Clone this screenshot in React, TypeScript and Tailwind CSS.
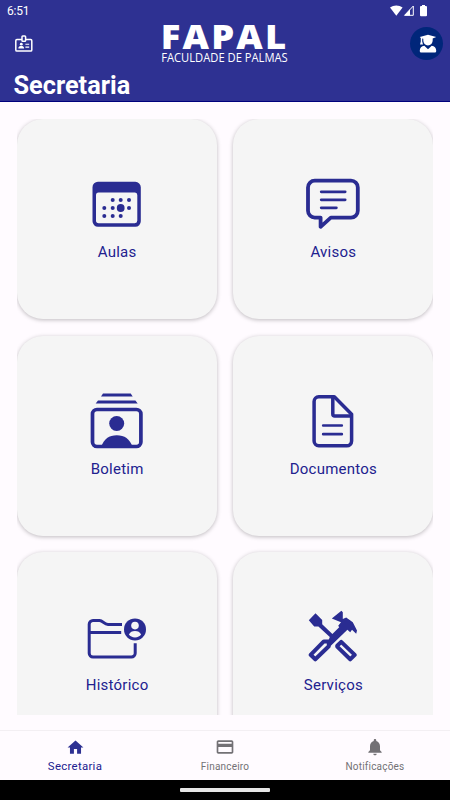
import type { ReactNode } from 'react';

function CalendarIcon() {
  return (
    <svg viewBox="0 0 60 60" className="size-[60px]" fill="currentColor">
      <path fillRule="evenodd" d="M11.2 7.8H48.3A5.5 5.5 0 0 1 53.8 13.3V47.3A5.5 5.5 0 0 1 48.3 52.8H11.2A5.5 5.5 0 0 1 5.5 47.3V13.3A5.5 5.5 0 0 1 11.2 7.8ZM11.5 18.5A2.5 2.5 0 0 0 9 21V46.5A2.7 2.7 0 0 0 11.7 49.2H47.8A2.7 2.7 0 0 0 50.3 46.5V21A2.5 2.5 0 0 0 48 18.5Z" />
      <circle cx="25.7" cy="26" r="2" />
      <circle cx="33.7" cy="26" r="2" />
      <circle cx="42" cy="26" r="2" />
      <circle cx="17.3" cy="34" r="2" />
      <circle cx="25.7" cy="34" r="2" />
      <circle cx="33.7" cy="34" r="3.9" />
      <circle cx="42" cy="34" r="2" />
      <circle cx="17.3" cy="42" r="2" />
      <circle cx="25.7" cy="42" r="2" />
      <circle cx="33.7" cy="42" r="2" />
    </svg>
  );
}

function MessageIcon() {
  return (
    <svg viewBox="0 0 60 60" className="size-[60px]" fill="none" stroke="currentColor" strokeWidth="3.8" strokeLinecap="round" strokeLinejoin="round">
      <path d="M12 6.7H48A6.8 6.8 0 0 1 54.8 13.5V36.8A6.8 6.8 0 0 1 48 43.6H27.8L17.6 52.8V43.6H12A6.8 6.8 0 0 1 5 36.8V13.5A6.8 6.8 0 0 1 12 6.7Z" />
      <path d="M18.2 17.8H42.2M18.2 25.8H42.2M18.2 33.8H33.4" strokeWidth="2.7" />
    </svg>
  );
}

function ReportIcon() {
  return (
    <svg viewBox="0 0 60 60" className="size-[60px]" fill="currentColor">
      <path d="M16 2.5H43.7L45.7 5.6H14ZM11 9.5H48.4L50.7 12.6H8.7Z" />
      <rect x="5.5" y="18.5" width="48.4" height="37" rx="4.5" fill="none" stroke="currentColor" strokeWidth="3.7" />
      <circle cx="29.7" cy="32.5" r="7.5" />
      <path d="M14 56C17 48 22 44.3 29.8 44.3S42.6 48 45.7 56Z" />
    </svg>
  );
}

function DocumentIcon() {
  return (
    <svg viewBox="0 0 60 60" className="size-[60px]" fill="none" stroke="currentColor" strokeWidth="3.5" strokeLinecap="round" strokeLinejoin="round">
      <path d="M15.8 5.7H31.3L48.6 23.3V50A4.8 4.8 0 0 1 43.8 54.8H15.8A4.8 4.8 0 0 1 11.1 50V10.5A4.8 4.8 0 0 1 15.8 5.7Z" />
      <path d="M29.8 6.5V23A2 2 0 0 0 31.8 25H48" />
      <path d="M20.2 34.5H38.8M20.2 43.2H38.8" strokeWidth="2.7" />
    </svg>
  );
}

function FolderUserIcon() {
  return (
    <svg viewBox="0 0 60 60" className="size-[60px]" fill="none" stroke="currentColor" strokeWidth="3">
      <path d="M48.2 36.3V46.2A3.8 3.8 0 0 1 44.4 50H6A3.8 3.8 0 0 1 2.2 46.2V17.3A3.8 3.8 0 0 1 6 13.5H12.5C16 13.5 17 17.4 21 17.4H35M2.2 25.4H34.2" />
      <circle cx="48" cy="22.4" r="11" fill="currentColor" stroke="none" />
      <circle cx="48" cy="18.6" r="3.8" fill="#f5f5f5" stroke="none" />
      <path d="M41.9 27.5C43 25.2 45.2 24.1 48 24.1S53 25.2 54.1 27.5C52.8 29.3 50.8 30.4 48 30.4S43.2 29.3 41.9 27.5Z" fill="#f5f5f5" stroke="none" />
    </svg>
  );
}

function ToolsIcon() {
  return (
    <svg viewBox="0 0 60 60" className="size-[60px]" fill="currentColor">
      <path d="M5.8 13.2L12.5 6.3L19.2 12.9V17.2L29.4 27L36.2 20.3L35.2 18.8L38 15.2L28.8 11.4L38.4 3.8L39.8 5.2V12L43.2 10.6L49.8 15.2L54 23.4L53.2 26.8L49 22.8L47.2 25.2L44.4 22.8L27.6 39L24.3 36.5L26.8 30L15.4 19.6H11.2Z" />
      <g fill="none" stroke="currentColor" strokeWidth="4" strokeLinejoin="round">
        <path d="M20.8 34.4H25.8V39.2L12.3 52.3L7.6 47.8Z" />
        <path d="M38.2 34.9L51.8 47.9L47.2 52.3L34.2 39.6V38.7Z" />
      </g>
    </svg>
  );
}

function BadgeIcon() {
  return (
    <svg viewBox="0 0 18 18" className="size-[18px]" fill="none" stroke="white" strokeWidth="1.5">
      <path d="M7 4.6H1.9A1.1 1.1 0 0 0 .8 5.7V15A1.1 1.1 0 0 0 1.9 16.1H15.7A1.1 1.1 0 0 0 16.8 15V5.7A1.1 1.1 0 0 0 15.7 4.6H10.8" />
      <rect x="7" y=".9" width="3.6" height="5.4" rx="0.8" />
      <path d="M10.4 9.2H14.2M10.4 12.1H14.2" strokeWidth="1.1" />
      <circle cx="6.3" cy="9.2" r="1.4" fill="white" stroke="none" />
      <path d="M3.3 13.4C3.3 11.6 4.9 11.1 6.3 11.1S9.1 11.6 9.1 13.4Z" fill="white" stroke="none" />
    </svg>
  );
}

function StudentIcon() {
  return (
    <svg viewBox="0 0 18 20" className="h-5 w-[18px] translate-x-px" fill="white">
      <path d="M.8 3L9 .8L17.2 3L13.7 4.4V6.3C13.7 9.2 11.6 11.5 9 11.5S4.3 9.2 4.3 6.3V4.8L3.2 4.4V7.4L4 10.4H1L1.8 7.4V3.9Z" />
      <path d="M5.3 11.8L9 15.3L12.7 11.8C15.5 12.3 17.2 14 17.2 16.5V17.3Q17.2 18.6 15.9 18.6H2.1Q.8 18.6 .8 17.3V16.5C.8 14 2.5 12.3 5.3 11.8Z" />
    </svg>
  );
}

function StatusIcons() {
  return (
    <svg viewBox="0 0 38 12" className="h-3 w-[38px]" fill="white">
      <path d="M0 2.4C3.6-.3 9-.3 12.6 2.4L6.3 10.8Z" />
      <path d="M23.3 1V10.3H14.6Z" fill="none" stroke="white" />
      <path d="M20 4.2V10.5H14.4Z" />
      <path d="M32 0H35V1H36Q37 1 37 2V10.3Q37 11.3 36 11.3H31Q30 11.3 30 10.3V2Q30 1 31 1H32Z" />
    </svg>
  );
}

function Card({ label, children }: { label: string; children: ReactNode }) {
  return (
    <button type="button" className="flex h-[200px] flex-col items-center rounded-[26px] bg-[#f5f5f5] pt-[55px] text-[#2a2c92] shadow-[0_1px_4px_rgba(0,0,0,0.26)]">
      {children}
      <span className="mt-[8px] pl-[0.5px] text-[15px] leading-5 tracking-[0.25px] text-[#21218f]">{label}</span>
    </button>
  );
}

export default function App() {
  return (
    <div className="flex h-[800px] w-[450px] flex-col overflow-hidden bg-[#fffbff] font-[Roboto,sans-serif]">
      <header className="h-[102px] shrink-0 border-b border-[#00007c] bg-[#2e3192] text-white">
        <div className="flex h-[22px] items-center justify-between pr-[22px] pl-[7px]">
          <span className="text-[12px] leading-none tracking-[-0.2px]">6:51</span>
          <StatusIcons />
        </div>
        <div className="flex h-[46px] justify-between pr-[7px] pl-[15px]">
          <div className="w-[33px] pt-[13px]">
            <BadgeIcon />
          </div>
          <svg viewBox="0 0 130 46" className="h-[46px] w-[130px] overflow-visible" fill="white">
            <text x="-3.2" y="27.2" textLength="127.5" lengthAdjust="spacingAndGlyphs" className="font-['Open_Sans',sans-serif] text-[34px] font-extrabold tracking-[2px]">FAPAL</text>
            <text x="-2.8" y="40.2" textLength="126.5" lengthAdjust="spacingAndGlyphs" className="font-['Open_Sans',sans-serif] text-[12px] font-normal">FACULDADE DE PALMAS</text>
          </svg>
          <div className="mt-[5px] flex size-[33px] items-center justify-center rounded-full bg-[#00267a]">
            <StudentIcon />
          </div>
        </div>
        <h1 className="pl-[13.5px] text-[25.3px] leading-[35px] font-bold">Secretaria</h1>
      </header>

      <main className="mx-[17px] mt-[17px] grid h-[596px] shrink-0 grid-cols-2 content-start gap-[16.5px] overflow-hidden">
        <Card label="Aulas"><CalendarIcon /></Card>
        <Card label="Avisos"><MessageIcon /></Card>
        <Card label="Boletim"><ReportIcon /></Card>
        <Card label="Documentos"><DocumentIcon /></Card>
        <Card label="Histórico"><FolderUserIcon /></Card>
        <Card label="Serviços"><ToolsIcon /></Card>
      </main>

      <nav className="mt-[15px] grid h-[50px] shrink-0 grid-cols-3 border-t border-[#f3eff3] text-[#737175]">
        <a href="#secretaria" className="flex flex-col items-center pt-[7px] text-[#2e3192]">
          <svg viewBox="0 0 24 24" className="size-[19px]" fill="currentColor">
            <path d="M10 20v-6h4v6h5v-8h3L12 3 2 12h3v8z" />
          </svg>
          <span className="mt-[2px] text-[11.4px] leading-[14px] tracking-[0.3px] text-[#21218f]">Secretaria</span>
        </a>
        <a href="#financeiro" className="flex flex-col items-center pt-[7px]">
          <svg viewBox="0 0 24 24" className="-mt-px size-[20px]" fill="currentColor">
            <path d="M20 4H4c-1.11 0-1.99.89-1.99 2L2 18c0 1.11.89 2 2 2h16c1.11 0 2-.89 2-2V6c0-1.11-.89-2-2-2zm0 14H4v-6h16v6zm0-10H4V6h16v2z" />
          </svg>
          <span className="mt-[3px] text-[10px] leading-[14px] tracking-[0.2px]">Financeiro</span>
        </a>
        <a href="#notificacoes" className="flex flex-col items-center pt-[7px]">
          <svg viewBox="0 0 24 24" className="-mt-px size-[20px]" fill="currentColor">
            <path d="M12 22c1.1 0 2-.9 2-2h-4c0 1.1.89 2 2 2zm6-6v-5c0-3.07-1.64-5.64-4.5-6.32V4c0-.83-.67-1.5-1.5-1.5s-1.5.67-1.5 1.5v.68C7.63 5.36 6 7.92 6 11v5l-2 2v1h16v-1l-2-2z" />
          </svg>
          <span className="mt-[3px] text-[10px] leading-[14px] tracking-[0.2px]">Notificações</span>
        </a>
      </nav>

      <div className="flex h-5 shrink-0 items-center justify-center bg-black">
        <div className="h-1 w-[90px] rounded-[1px] bg-[#e6e6e6]" />
      </div>
    </div>
  );
}
